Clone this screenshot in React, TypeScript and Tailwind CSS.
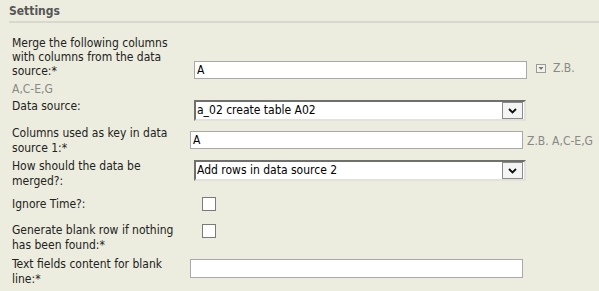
import React from 'react'

const FONT = { fontFamily: '"DejaVu Sans Condensed", "DejaVu Sans", sans-serif' }

function TextBox({ value = '', className = '' }: { value?: string; className?: string }) {
  return (
    <div className={`w-[333px] bg-white border border-[#a9a9a9] pl-[2px] text-[12px] leading-[16px] text-black ${className}`}>
      {value}
    </div>
  )
}

function SelectBox({ value }: { value: string }) {
  return (
    <div className="flex items-center w-[332px] h-[21px] bg-white border-t-2 border-l-2 border-r-2 border-b-2 border-t-[#6f6f6f] border-l-[#6f6f6f] border-r-[#e2e2d8] border-b-[#e2e2d8]">
      <span className="pl-[1px] text-[12px] leading-[15px] text-black whitespace-nowrap">{value}</span>
      <div className="ml-auto mr-px flex items-center justify-center w-[21px] h-[17px] border border-[#8a8a8a] bg-[#f4f4f4]">
        <svg width="9" height="6" viewBox="0 0 9 6">
          <path d="M1 1l3.5 3.5L8 1" fill="none" stroke="#111" strokeWidth="1.8" />
        </svg>
      </div>
    </div>
  )
}

function Checkbox() {
  return <div className="w-[14px] h-[14px] bg-white border border-[#7a7a7a]" />
}

function DropIcon() {
  return (
    <svg width="10" height="9" viewBox="0 0 10 9" className="shrink-0">
      <rect x="0.5" y="0.5" width="9" height="8" fill="#f2f2ea" stroke="#9a9a9a" />
      <path d="M2.5 3h5L5 6z" fill="#777" />
    </svg>
  )
}

export default function App() {
  return (
    <div className="w-[599px] h-[291px] bg-[#ecedde] overflow-hidden text-[#222]" style={FONT}>
      {/* Header */}
      <div className="ml-[9px] pt-[4px] h-[23px] border-b-2 border-[#d8d8ce]">
        <div className="text-[12px] leading-[14px] font-bold text-[#555]">Settings</div>
      </div>

      <div className="pl-[12px] text-[12px]">
        {/* Merge columns */}
        <div className="flex items-end mt-[13px]">
          <div className="w-[182px] leading-[14px] whitespace-nowrap">
            Merge the following columns<br />with columns from the data<br />source:*
          </div>
          <TextBox value="A" className="h-[18px] mb-[-1px]" />
          <div className="flex items-center gap-[7px] ml-[9px] mb-[3px] text-[#888] leading-[14px]">
            <DropIcon />
            <span>Z.B.</span>
          </div>
        </div>
        <div className="mt-[4px] leading-[14px] text-[#888]">A,C-E,G</div>

        {/* Data source */}
        <div className="flex items-start mt-[4px]">
          <div className="w-[182px] leading-[15px] mt-[-1px]">Data source:</div>
          <SelectBox value="a_02 create table A02" />
        </div>

        {/* Key columns */}
        <div className="flex items-start mt-[5px]">
          <div className="w-[178px] leading-[15px] whitespace-nowrap">
            Columns used as key in data<br />source 1:*
          </div>
          <TextBox value="A" className="h-[18px] mt-[5px]" />
          <div className="ml-[4px] mt-[8px] leading-[14px] text-[#888] whitespace-nowrap">Z.B. A,C-E,G</div>
        </div>

        {/* Merge mode */}
        <div className="flex items-start mt-[4px]">
          <div className="w-[182px] leading-[15px] mt-[-1px] whitespace-nowrap">
            How should the data be<br />merged?:
          </div>
          <SelectBox value="Add rows in data source 2" />
        </div>

        {/* Ignore time */}
        <div className="flex items-start mt-[8px]">
          <div className="w-[190px] leading-[15px]">Ignore Time?:</div>
          <Checkbox />
        </div>

        {/* Blank row */}
        <div className="flex items-start mt-[11px]">
          <div className="w-[190px] leading-[15px] whitespace-nowrap">
            Generate blank row if nothing<br />has been found:*
          </div>
          <div className="mt-px">
            <Checkbox />
          </div>
        </div>

        {/* Blank line text */}
        <div className="flex items-start mt-[4px]">
          <div className="w-[178px] leading-[15px] whitespace-nowrap">
            Text fields content for blank<br />line:*
          </div>
          <TextBox className="h-[19px] mt-[2px]" />
        </div>
      </div>
    </div>
  )
}
